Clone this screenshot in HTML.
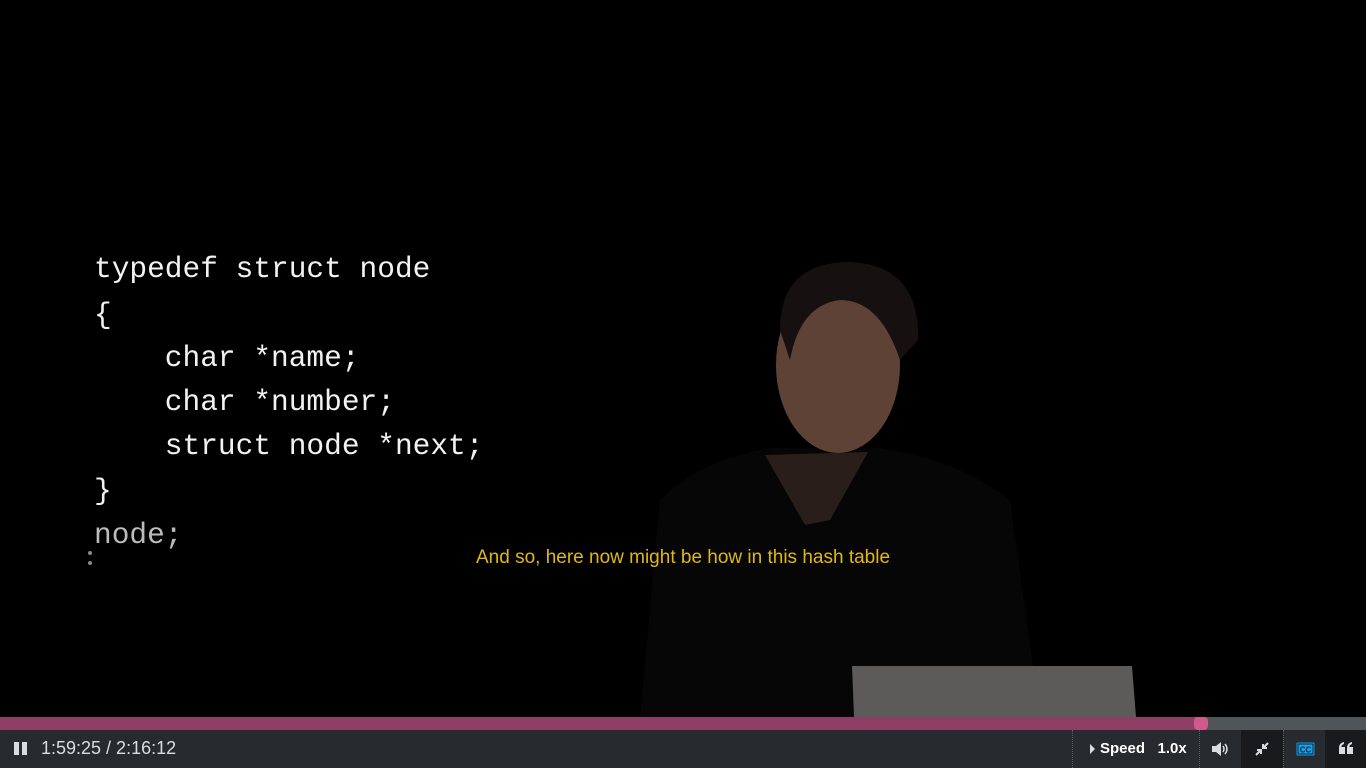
<!DOCTYPE html>
<html><head><style>
*{margin:0;padding:0;box-sizing:border-box}
body{width:1366px;height:768px;background:#000;position:relative;overflow:hidden;font-family:"Liberation Sans",sans-serif}
.code{position:absolute;left:94px;font-family:"Liberation Mono",monospace;font-size:29.5px;color:#f2f2f2;white-space:pre;line-height:30px}
.sub{position:absolute;left:0;width:1366px;top:547px;text-align:center;color:#e0b814;font-size:19px}
.prog{position:absolute;top:717px;left:0;width:1366px;height:13px;background:#4f5559}
.bar{position:absolute;top:730px;left:0;width:1366px;height:38px;background:#272a2e;color:#d8dde2}
.div{position:absolute;top:0;height:38px;border-left:1px dotted #5a5f64}
</style></head><body>
<div class="code" style="top:254px">typedef struct node</div>
<div class="code" style="top:300px">{</div>
<div class="code" style="top:343px">    char *name;</div>
<div class="code" style="top:387px">    char *number;</div>
<div class="code" style="top:431px">    struct node *next;</div>
<div class="code" style="top:476px">}</div>
<div class="code" style="top:520px;color:#bbb">node;</div>
<div style="position:absolute;left:88px;top:551px;width:4px;height:14px;border-left:4px dotted #888"></div>

<svg style="position:absolute;left:0;top:0" width="1366" height="717">
<path d="M640 717 L660 500 Q700 460 770 448 L880 448 Q960 460 1010 500 L1040 717Z" fill="#060606"/>
<path d="M765 455 L805 525 L830 520 L868 452 Z" fill="#2a1e1a"/>
<ellipse cx="838" cy="365" rx="62" ry="88" fill="#5e4236"/>
<path d="M780 330 Q780 262 850 262 Q920 265 918 340 L900 360 Q880 300 840 300 Q800 305 790 360Z" fill="#161110"/>
<path d="M852 666 L1132 666 L1136 717 L854 717Z" fill="#5c5b5a"/>
</svg>

<div class="sub">And so, here now might be how in this hash table</div>

<div class="prog"><div style="width:1200px;height:13px;background:#8e3d63"></div>
<div style="position:absolute;left:1194px;top:0;width:14px;height:13px;border-radius:4px;background:#d05a8e"></div></div>

<div class="bar">
<div style="position:absolute;left:14px;top:12px;width:5px;height:13px;background:#d8dde2"></div>
<div style="position:absolute;left:22px;top:12px;width:5px;height:13px;background:#d8dde2"></div>
<div style="position:absolute;left:41px;top:8px;font-size:18px">1:59:25 / 2:16:12</div>
<div class="div" style="left:1072px"></div>
<div style="position:absolute;left:1090px;top:14px;width:0;height:0;border-left:5px solid #d8dde2;border-top:5px solid transparent;border-bottom:5px solid transparent"></div>
<div style="position:absolute;left:1100px;top:10px;font-size:15px;font-weight:bold;color:#fff">Speed&nbsp;&nbsp;&nbsp;1.0x</div>
<div class="div" style="left:1199px"></div>
<svg style="position:absolute;left:1211px;top:11px" width="18" height="16"><path d="M1 5h4l5-4v14l-5-4H1z" fill="#d8dde2"/><path d="M12 5q2 3 0 6M14 3q4 5 0 10" stroke="#d8dde2" stroke-width="1.5" fill="none"/></svg>
<div style="position:absolute;left:1241px;top:0;width:42px;height:38px;background:#181a1b"></div>
<svg style="position:absolute;left:1254px;top:11px" width="16" height="16"><path d="M14 2L9 7M9 3v4h4M2 14l5-5M3 9h4v4" stroke="#d8dde2" stroke-width="2" fill="none"/></svg>
<div class="div" style="left:1283px"></div>
<svg style="position:absolute;left:1296px;top:12px" width="19" height="14"><rect x="0.5" y="0.5" width="18" height="13" fill="#1a9ee6" rx="1"/><rect x="2" y="2" width="15" height="10" fill="none" stroke="#0b2a44" stroke-width="1"/><text x="9.5" y="10.5" font-size="8" font-weight="bold" text-anchor="middle" fill="#0b2a44" font-family="Liberation Sans">CC</text></svg>
<div style="position:absolute;left:1325px;top:0;width:41px;height:38px;background:#181a1b"></div>
<svg style="position:absolute;left:1338px;top:12px" width="16" height="13"><path d="M1 6Q1 1 6 0v2Q3 3 3.5 5H7v7H1z M9 6Q9 1 14 0v2Q11 3 11.5 5H15v7H9z" fill="#d8dde2"/></svg>
</div>
</body></html>
